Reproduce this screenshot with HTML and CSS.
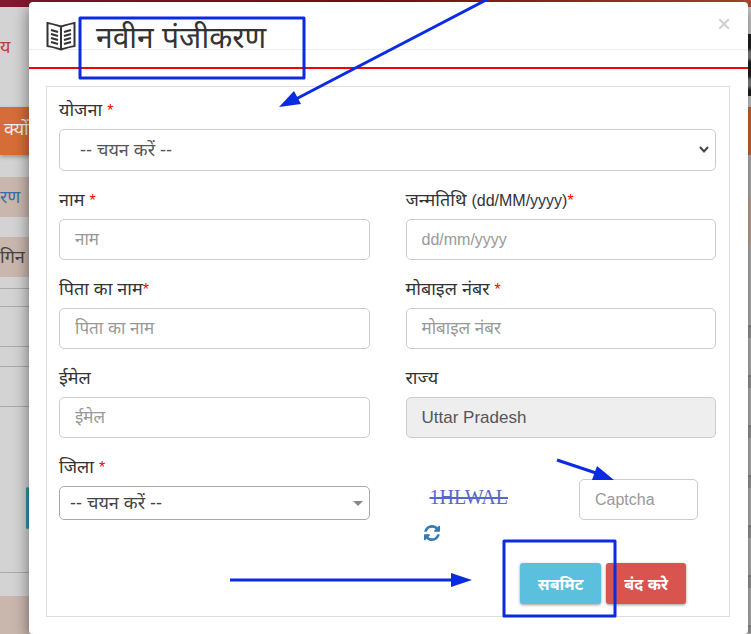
FILE: index.html
```html
<!DOCTYPE html>
<html lang="hi">
<head>
  <meta charset="UTF-8">
  <title>नवीन पंजीकरण</title>
  <link rel="stylesheet" href="styles.css">
</head>
<body>
  <div class="page">
    <div class="topbar"></div>
    <div class="banner"><span>य</span><i class="emblem"></i></div>
    <div class="navbar">क्यों</div>
    <div class="columns">
      <div class="side">
        <a href="#" class="tab">रण</a>
        <div class="tab tab-login">गिन</div>
        <div class="side-box">
          <div class="side-input"></div>
          <div class="side-input"></div>
          <div class="side-button"></div>
        </div>
        <div class="side-footer"></div>
      </div>
      <div class="list">
        <div class="list-head"></div>
        <div class="list-rows"></div>
      </div>
    </div>
  </div>

  <div class="modal" role="dialog" aria-labelledby="modalTitle">
    <div class="modal-header">
      <div class="header-line"><button type="button" class="close" aria-label="Close">×</button></div>
      <div class="title">
        <svg class="book" viewBox="0 0 30 30" width="30" height="30">
          <path d="M15 5.500 C11 4 6 3 1.500 2 V25 C6 26 11 27 15 28.500 C19 27 24 26 28.500 25 V2 C24 3 19 4 15 5.500 V28.500"/>
          <path d="M5 9 L12 11 M5 13 L12 15 M5 17 L12 19 M5 21 L12 23 M25 9 L18 11 M25 13 L18 15 M25 17 L18 19 M25 21 L18 23"/>
        </svg>
        <h2 id="modalTitle">नवीन पंजीकरण</h2>
      </div>
    </div>

    <form class="form">
      <div class="field wide">
        <label for="scheme">योजना <b>*</b></label>
        <div class="select-wrap">
          <select id="scheme" class="control scheme"><option>-- चयन करें --</option></select>
          <svg class="chevron" viewBox="0 0 10 8" width="10" height="8"><path d="M1 1 L5 5.500 L9 1"/></svg>
        </div>
      </div>
      <div class="field">
        <label for="name">नाम <b>*</b></label>
        <input type="text" id="name" class="control" placeholder="नाम">
      </div>
      <div class="field">
        <label for="dob">जन्मतिथि <small>(dd/MM/yyyy)</small><b>*</b></label>
        <input type="text" id="dob" class="control latin" placeholder="dd/mm/yyyy">
      </div>
      <div class="field">
        <label for="father">पिता का नाम<b>*</b></label>
        <input type="text" id="father" class="control" placeholder="पिता का नाम">
      </div>
      <div class="field">
        <label for="mobile">मोबाइल नंबर <b>*</b></label>
        <input type="text" id="mobile" class="control" placeholder="मोबाइल नंबर">
      </div>
      <div class="field">
        <label for="email">ईमेल</label>
        <input type="email" id="email" class="control" placeholder="ईमेल">
      </div>
      <div class="field">
        <label for="state">राज्य</label>
        <input type="text" id="state" class="control" value="Uttar Pradesh" readonly>
      </div>
      <div class="field">
        <label for="district">जिला <b>*</b></label>
        <div class="select-wrap">
          <select id="district" class="district"><option>-- चयन करें --</option></select>
          <svg class="caret" viewBox="0 0 10 5" width="10" height="5"><path d="M0 0 H10 L5 5 Z"/></svg>
        </div>
      </div>
      <div class="captcha">
        <div class="captcha-code">
          <span class="code">1HLWAL</span>
          <button type="button" class="refresh" aria-label="Refresh captcha">
            <svg viewBox="0 0 1536 1536" width="16" height="16">
              <path d="M1511 928q0 5-1 7-64 268-268 434.500T764 1536q-146 0-282.500-55T238 1324l-129 129q-19 19-45 19t-45-19-19-45V960q0-26 19-45t45-19h448q26 0 45 19t19 45-19 45l-137 137q71 66 161 102t187 36q134 0 250-65t186-179q11-17 53-117 8-23 30-23h192q13 0 22.500 9.500t9.500 22.500zm25-800v448q0 26-19 45t-45 19h-448q-26 0-45-19t-19-45 19-45l138-138Q969 256 768 256q-134 0-250 65T332 500q-11 17-53 117-8 23-30 23H50q-13 0-22.500-9.500T18 608v-7q65-268 270-434.500T768 0q146 0 284 55.500T1297 212l130-129q19-19 45-19t45 19 19 45z"/>
            </svg>
          </button>
        </div>
        <input type="text" class="control latin captcha-input" placeholder="Captcha" aria-label="Captcha">
      </div>
      <div class="actions">
        <button type="submit" class="btn btn-info">सबमिट</button>
        <button type="button" class="btn btn-danger">बंद करे</button>
      </div>
    </form>
  </div>

  <!-- help marks drawn over the dialog -->
  <svg class="marks" viewBox="0 0 751 634" width="751" height="634">
    <g class="mark-line">
      <rect x="80" y="18" width="224" height="60"/>
      <rect x="504" y="541" width="111" height="75"/>
      <path d="M488 -1 L296 99"/>
      <path d="M557 460 L596 473"/>
      <path d="M230 580 L454 580"/>
    </g>
    <g class="mark-head">
      <path d="M279 107 L294 91 L301 104 Z"/>
      <path d="M614 480 L597 466 L592 480 Z"/>
      <path d="M472 580 L451 573 L451 587 Z"/>
    </g>
  </svg>
</body>
</html>
```

FILE: styles.css
```css
* {
  box-sizing: border-box;
}

body {
  margin: 0;
  min-height: 100vh;
  display: grid;
  background: #d3d3d3;
  color: #333;
  font: 17px/24px "Liberation Sans", "Noto Sans", "Noto Sans Devanagari", sans-serif;
}

.page,
.modal {
  grid-area: 1 / 1;
}

/* dimmed page behind the dialog */
.page {
  font-size: 18px;
}

.topbar {
  height: 7px;
  background: linear-gradient(to right, #84162f, #7f1015 50%, #b04833);
}

.banner {
  height: 100px;
  display: flex;
  justify-content: space-between;
  padding-top: 27px;
  color: #c33a38;
  line-height: 26px;
}

.emblem {
  width: 3px;
  height: 62px;
  background: repeating-linear-gradient(#222 0 14px, #888 18px 24px, #222 28px);
}

.navbar {
  height: 48px;
  padding-left: 4px;
  background: #d66d39;
  color: #eee;
  line-height: 44px;
  box-shadow: 0 2px 4px #999;
}

.columns {
  display: flex;
  justify-content: space-between;
}

.side {
  width: 29px;
  padding-top: 22px;
}

.tab {
  display: flex;
  height: 40px;
  margin-bottom: 20px;
  align-items: center;
  background: #c9b7ae;
  color: #3a6ea5;
  text-decoration: none;
}

.tab-login {
  margin-bottom: 11px;
  color: #444;
}

.side-box {
  height: 285px;
  padding-top: 17px;
  border: solid #aaa;
  border-width: 1px 0;
}

.side-input {
  height: 41px;
  margin-bottom: 19px;
  border: solid #aaa;
  border-width: 1px 0;
}

.side-button {
  height: 42px;
  margin: 80px 0 0 26px;
  border-radius: 3px;
  background: #2b99a3;
}

.side-footer {
  height: 38px;
  margin-top: 23px;
  background: #c9b7ae;
}

.list {
  width: 3px;
  padding-top: 40px;
  background: #bbb;
}

.list-head {
  height: 50px;
  background: #c9b0a2;
}

.list-rows {
  height: 345px;
  margin-top: 43px;
  background: repeating-linear-gradient(#bbb 0 37px, #777 38px, #a0a0a0 39px 50px);
}

.modal {
  z-index: 1;
  min-width: 0;
  margin: 2px 3px 0 29px;
  border-radius: 4px;
  background: #fff;
  box-shadow: 0 5px 15px rgba(0,0,0,0.5);
}

.modal-header {
  display: grid;
  border-bottom: 2px solid #f00505;
}

.header-line,
.title {
  grid-area: 1 / 1;
}

.header-line {
  height: 48px;
  padding: 12px 17px 0;
  border-bottom: 1px solid #eee;
  text-align: right;
}

.close {
  position: relative;
  z-index: 1;
  padding: 0;
  border: 0;
  background: none;
  color: #ccc;
  font: 24px/20px "Liberation Sans", sans-serif;
  cursor: pointer;
}

.title {
  display: flex;
  gap: 20px;
  height: 65px;
  padding: 19px 17px 0;
}

.book {
  fill: none;
  stroke: #333;
  stroke-width: 2;
}

h2 {
  margin: 0;
  font-size: 30px;
  font-weight: normal;
  line-height: 34px;
}

.form {
  display: grid;
  grid-template-columns: 1fr 1fr;
  gap: 17px 36px;
  margin: 17px 18px 16px 17px;
  padding: 11px 13px 12px 12px;
  border: 1px solid #ddd;
}

.wide,
.actions {
  grid-column: 1 / -1;
}

.field {
  display: flex;
  flex-direction: column;
  gap: 7px;
}

label {
  height: 24px;
  font-size: 18px;
}

label b,
label small {
  font-size: 16px;
  font-weight: normal;
}

label b {
  color: #f00;
}

.control {
  width: 100%;
  height: 41px;
  padding: 0 15px;
  border: 1px solid #ccc;
  border-radius: 5px;
  background: #fff;
  color: #555;
  font: inherit;
}

.control::placeholder {
  color: #999;
}

.control:read-only:not(select) {
  background: #eee;
}

.control.latin {
  font-size: 16px;
}

.select-wrap {
  display: grid;
  align-items: center;
}

.select-wrap > * {
  grid-area: 1 / 1;
}

.scheme {
  height: 42px;
  padding: 0 20px;
  appearance: none;
  font-size: 18px;
}

.chevron,
.caret {
  justify-self: end;
  margin-right: 7px;
  pointer-events: none;
}

.chevron {
  fill: none;
  stroke: #444;
  stroke-width: 2;
}

.caret {
  fill: #888;
}

.district {
  appearance: none;
  width: 100%;
  height: 34px;
  padding: 0 10px;
  border: 1px solid #aaa;
  border-radius: 5px;
  background: #fff;
  color: #444;
  font: inherit;
  font-size: 18px;
}

.captcha {
  display: flex;
  justify-content: space-between;
  padding: 24px 18px 0;
}

.captcha-code {
  display: flex;
  flex-direction: column;
  gap: 10px;
}

.code {
  padding: 6px;
  color: #5868c8;
  font: 20px/24px "Liberation Serif", serif;
  text-decoration: line-through;
}

.refresh {
  width: 16px;
  height: 16px;
  padding: 0;
  border: 0;
  background: none;
  fill: #337ab7;
  cursor: pointer;
}

.refresh svg {
  display: block;
}

.captcha-input {
  width: 119px;
}

.actions {
  display: flex;
  justify-content: flex-end;
  gap: 5px;
  padding: 5px 30px 0 0;
}

.btn {
  height: 41px;
  padding: 0 18px;
  border: 0;
  border-radius: 3px;
  color: #fff;
  font-family: inherit;
  font-size: 16px;
  font-weight: bold;
  box-shadow: 0 1px 3px rgba(0,0,0,0.4);
  cursor: pointer;
}

.btn-info {
  background: #5bc0de;
}

.btn-danger {
  background: #d9534f;
}

.marks {
  position: absolute;
  top: 0;
  left: 0;
  z-index: 2;
  pointer-events: none;
}

.mark-line {
  fill: none;
  stroke: #0b2be3;
  stroke-width: 3;
  stroke-linejoin: round;
}

.mark-head {
  fill: #0b2be3;
}
```
